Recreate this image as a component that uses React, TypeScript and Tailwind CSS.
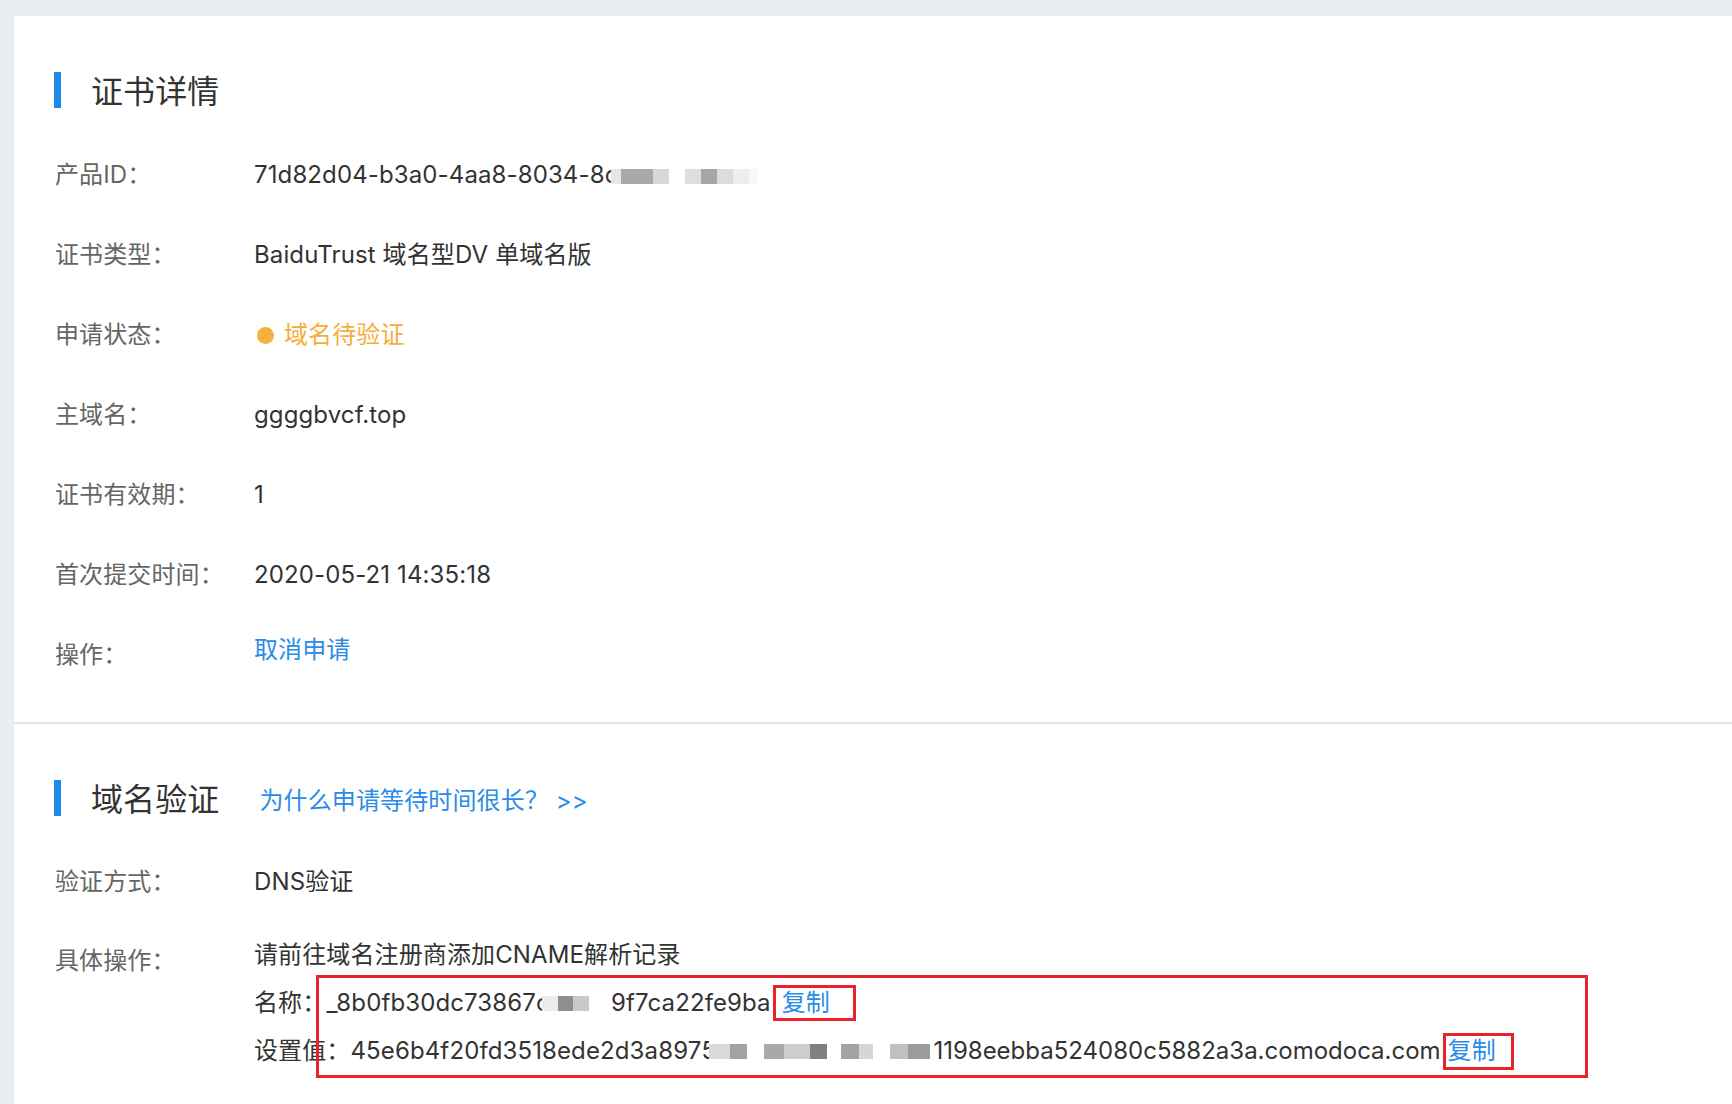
import React from 'react';

type Seg = [number, string];

// pixelated redaction blocks, as in the screenshot
const Blur = ({ segs }: { segs: Seg[] }) => {
  return (
    <span className="inline-flex h-[15px] align-middle">
      {segs.map(([w, c], i) => (
        <span key={i} className="h-full" style={{ width: w, backgroundColor: c }} />
      ))}
    </span>
  );
};

const Cut = ({ ch, w }: { ch: string; w: number }) => (
  <span className="inline-block overflow-hidden align-bottom" style={{ width: w }}>
    {ch}
  </span>
);

const SectionTitle = ({ title, children }: { title: string; children?: React.ReactNode }) => (
  <div className="flex h-[36px] items-center pl-[40px]">
    <div className="h-[36px] w-[7px] bg-[#1e8ae8]" />
    <h2 className="ml-[30px] pt-[4px] text-[32px] leading-none text-[#333]">{title}</h2>
    {children}
  </div>
);

const Row = ({ label, children }: { label: string; children: React.ReactNode }) => (
  <div className="flex h-[80px] items-center pl-[41px] pt-[4px]">
    <div className="w-[199px] shrink-0 text-[#666]">{label}</div>
    <div className="text-[#333]">{children}</div>
  </div>
);

const App = () => {
  return (
    <div className="min-h-screen bg-[#e9ecf0] pl-[14px] pt-[16px] font-[Inter,'Noto_Sans_CJK_SC',sans-serif] text-[24px] tracking-[0.12px]">
      <div className="min-h-[1088px] bg-white">
        {/* 证书详情 */}
        <div className="pt-[56px] pb-[29px]">
          <SectionTitle title="证书详情" />
          <div className="mt-[25px]">
            <Row label="产品ID：">
              <span className="whitespace-nowrap">
                71d82d04-b3a0-4aa8-8034-8<Cut ch="c" w={6} />
                <Blur
                  segs={[
                    [10, '#e6e6e6'],
                    [32, '#a9a9a9'],
                    [16, '#d8d8d8'],
                    [16, '#ffffff'],
                    [16, '#dedede'],
                    [16, '#a6a6a6'],
                    [16, '#dcdcdc'],
                    [16, '#ededed'],
                    [8, '#f8f8f8'],
                  ]}
                />
              </span>
            </Row>
            <Row label="证书类型：">BaiduTrust 域名型DV 单域名版</Row>
            <Row label="申请状态：">
              <span className="flex items-center text-[#f5ae3d]">
                <span className="mr-[10px] ml-[3px] h-[17px] w-[17px] rounded-full bg-[#f5b03e]" />
                域名待验证
              </span>
            </Row>
            <Row label="主域名：">ggggbvcf.top</Row>
            <Row label="证书有效期：">1</Row>
            <Row label="首次提交时间：">2020-05-21 14:35:18</Row>
            <Row label="操作：">
              <a className="mb-[10px] block cursor-pointer text-[#2a8ce8]">取消申请</a>
            </Row>
          </div>
        </div>

        <div className="h-[2px] bg-[#e4e6ea]" />

        {/* 域名验证 */}
        <div className="pt-[56px]">
          <SectionTitle title="域名验证">
            <a className="ml-[40px] cursor-pointer pt-[5px] text-[24px] text-[#2a8ce8]">为什么申请等待时间很长？ &gt;&gt;</a>
          </SectionTitle>
          <div className="mt-[24px]">
            <Row label="验证方式：">DNS验证</Row>
            <div className="flex items-start pl-[41px]">
              <div className="w-[199px] shrink-0 pt-[17px] leading-[48px] text-[#666]">具体操作：</div>
              <div className="relative pt-[11px] leading-[48px] text-[#333]">
                <div>请前往域名注册商添加CNAME解析记录</div>
                <div className="flex items-center whitespace-nowrap">
                  <span>名称：</span>
                  <span>
                    _8b0fb30dc73867<Cut ch="c" w={6} />
                  </span>
                  <Blur segs={[[16, '#ececec'], [15, '#8e8e8e'], [16, '#c9c9c9']]} />
                  <span className="ml-[22px]">9f7ca22fe9ba</span>
                  <span className="ml-[2px] inline-flex h-[36px] w-[83px] items-center border-[3px] border-[#e8212b] pl-[6px] text-[#2a8ce8]">
                    复制
                  </span>
                </div>
                <div className="flex items-center whitespace-nowrap">
                  <span>设置值：</span>
                  <span>
                    45e6b4f20fd3518ede2d3a897<Cut ch="5" w={8} />
                  </span>
                  <Blur
                    segs={[
                      [21, '#dadada'],
                      [17, '#a2a2a2'],
                      [17, '#ffffff'],
                      [20, '#a9a9a9'],
                      [26, '#cdcdcd'],
                      [17, '#808080'],
                      [14, '#ffffff'],
                      [18, '#a3a3a3'],
                      [14, '#d6d6d6'],
                      [17, '#ffffff'],
                      [18, '#c0c0c0'],
                      [22, '#9b9b9b'],
                    ]}
                  />
                  <span className="ml-[3px] tracking-normal">1198eebba524080c5882a3a.comodoca.com</span>
                  <span className="ml-[2px] inline-flex h-[37px] w-[71px] items-center border-[3px] border-[#e8212b] pl-[2px] text-[#2a8ce8]">
                    复制
                  </span>
                </div>
                {/* red annotation frame over the record lines */}
                <div className="pointer-events-none absolute left-[62px] top-[55px] h-[103px] w-[1272px] border-[3px] border-[#e8212b]" />
              </div>
            </div>
          </div>
        </div>
      </div>
    </div>
  );
};

export default App;
